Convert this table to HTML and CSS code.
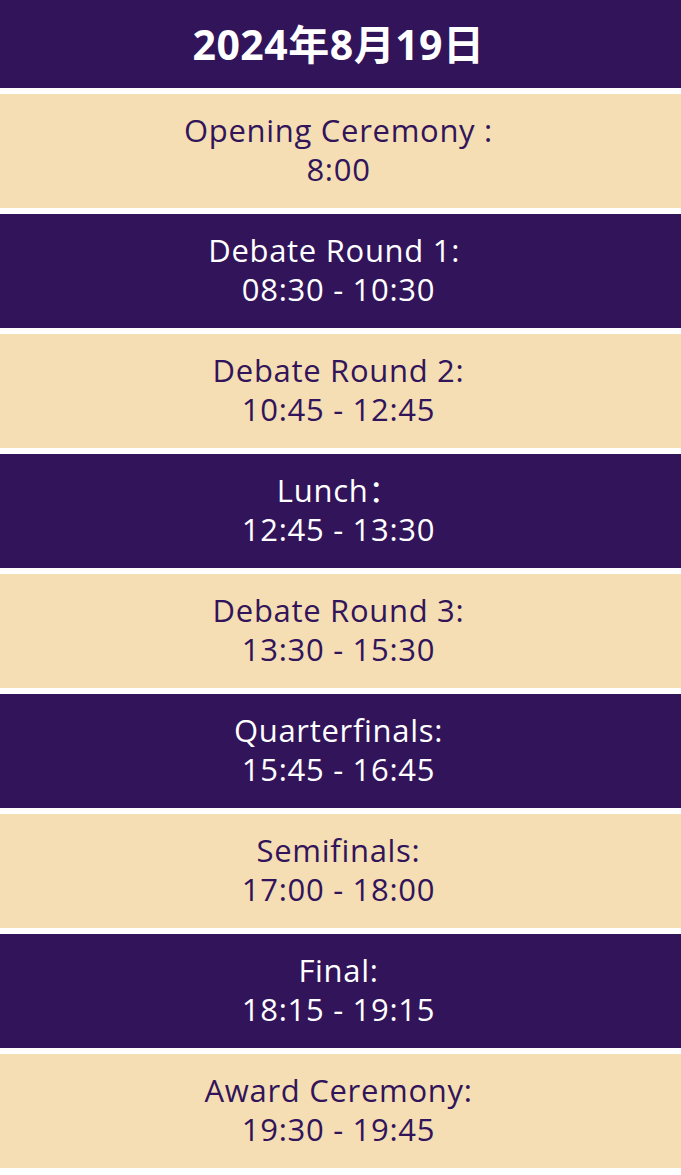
FILE: index.html
```html
<!DOCTYPE html>
<html lang="zh">
<head>
<meta charset="utf-8">
<title>Schedule</title>
<link rel="stylesheet" href="styles.css">
</head>
<body>
<main class="schedule">
  <h1 class="schedule-title">2024年8月19日</h1>
  <div class="slot slot-light">Opening Ceremony :<br>8:00</div>
  <div class="slot slot-dark">Debate Round 1:&nbsp;<br>08:30 - 10:30</div>
  <div class="slot slot-light">Debate Round 2:<br>10:45 - 12:45</div>
  <div class="slot slot-dark">Lunch：<br>12:45 - 13:30</div>
  <div class="slot slot-light">Debate Round 3:<br>13:30 - 15:30</div>
  <div class="slot slot-dark">Quarterfinals:<br>15:45 - 16:45</div>
  <div class="slot slot-light">Semifinals:<br>17:00 - 18:00</div>
  <div class="slot slot-dark">Final:<br>18:15 - 19:15</div>
  <div class="slot slot-light">Award Ceremony:<br>19:30 - 19:45</div>
</main>
</body>
</html>
```
FILE: styles.css
```css
html, body {
  margin: 0;
  padding: 0;
  background: #ffffff;
}

body {
  font-family: "Open Sans", "Noto Sans CJK SC", sans-serif;
}

.schedule {
  display: flex;
  flex-direction: column;
  gap: 6px;
  padding-bottom: 7px;
}

.schedule-title {
  margin: 0;
  height: 88px;
  display: flex;
  align-items: center;
  justify-content: center;
  padding-right: 4px;
  background: #32145a;
  color: #ffffff;
  font-family: "Open Sans", "Noto Sans CJK SC", sans-serif;
  font-weight: 700;
  font-size: 41px;
  letter-spacing: 0.5px;
  line-height: 1;
}

.slot {
  height: 114px;
  box-sizing: border-box;
  padding: 17px 4px 17px 0;
  text-align: center;
  font-size: 31px;
  letter-spacing: 0.7px;
  line-height: 39px;
}

.slot-light {
  background: #f5deb3;
  color: #32145a;
}

.slot-dark {
  background: #32145a;
  color: #ffffff;
}
```
